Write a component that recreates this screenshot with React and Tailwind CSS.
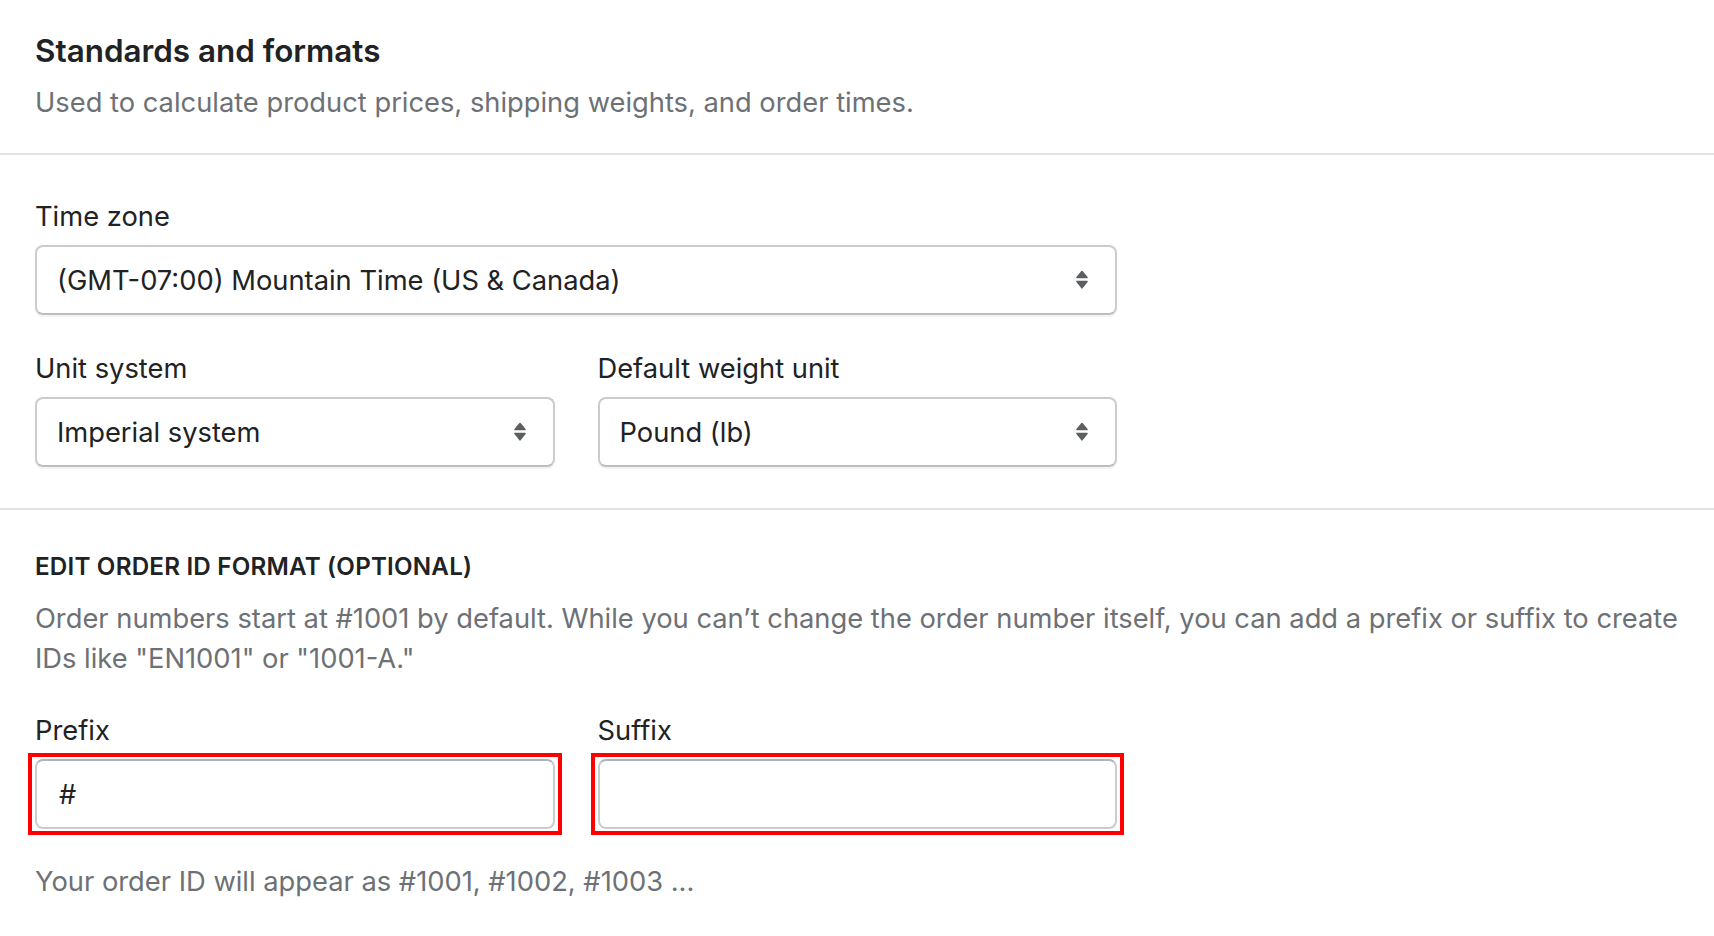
import React from "react";

function Arrows() {
  return (
    <svg width="12" height="20" viewBox="0 0 12 20" className="shrink-0">
      <polygon points="6,1.5 11,7.5 1,7.5" fill="#5c5f62" stroke="#5c5f62" strokeWidth="1.6" strokeLinejoin="round" />
      <polygon points="1,11.5 11,11.5 6,17.8" fill="#5c5f62" stroke="#5c5f62" strokeWidth="1.6" strokeLinejoin="round" />
    </svg>
  );
}

function Select({ value }) {
  return (
    <div className="mt-[9px] h-[70px] rounded-[8px] border-2 border-[#c9cccf] border-b-[#babfc4] bg-white shadow-[0_2px_0_rgba(22,29,37,0.05)] flex items-center justify-between pl-[20px] pr-[27px]">
      <span className="text-[27.3px] leading-[39px] text-[#202223]">{value}</span>
      <Arrows />
    </div>
  );
}

function Field({ label, value }) {
  return (
    <div>
      <div className="text-[27.3px] leading-[39px] text-[#202223]">{label}</div>
      <div className="relative mt-[9px]">
        <div className="absolute -inset-x-[7px] -inset-y-[6px] border-4 border-[#ff0000] pointer-events-none" />
        <div className="h-[70px] rounded-[8px] border-2 border-[#c9cccf] border-t-[#aeb4b9] bg-white flex items-center pl-[22px]">
          <span className="text-[27.3px] leading-[39px] text-[#202223]">{value}</span>
        </div>
      </div>
    </div>
  );
}

export default function App() {
  return (
    <div className="w-[1714px] h-[936px] bg-white font-['Inter',sans-serif] text-[#202223] overflow-hidden">
      <section className="px-[35px] pt-[28px] pb-[31px]">
        <h2 className="text-[31.4px] leading-[47px] font-semibold">Standards and formats</h2>
        <p className="mt-[8px] text-[27.3px] leading-[39px] text-[#6d7175]">
          Used to calculate product prices, shipping weights, and order times.
        </p>
      </section>
      <div className="h-[2px] bg-[#e1e3e5]" />
      <section className="px-[35px] pt-[42px] pb-[41px]">
        <div className="w-[1082px]">
          <div className="text-[27.3px] leading-[39px]">Time zone</div>
          <Select value="(GMT-07:00) Mountain Time (US & Canada)" />
          <div className="mt-[34px] grid grid-cols-2 gap-[43px]">
            <div>
              <div className="text-[27.3px] leading-[39px]">Unit system</div>
              <Select value="Imperial system" />
            </div>
            <div>
              <div className="text-[27.3px] leading-[39px]">Default weight unit</div>
              <Select value="Pound (lb)" />
            </div>
          </div>
        </div>
      </section>
      <div className="h-[2px] bg-[#e1e3e5]" />
      <section className="px-[35px] pt-[41px]">
        <h3 className="text-[24.2px] leading-[31px] font-semibold uppercase tracking-[0.2px]">Edit order ID format (optional)</h3>
        <p className="mt-[17px] text-[27.3px] leading-[40px] text-[#6d7175]">
          Order numbers start at #1001 by default. While you can’t change the order number itself, you can add a prefix or suffix to create IDs like "EN1001" or "1001-A."
        </p>
        <div className="mt-[32px] w-[1082px] grid grid-cols-2 gap-[43px]">
          <Field label="Prefix" value="#" />
          <Field label="Suffix" value="" />
        </div>
        <p className="mt-[33px] text-[27.3px] leading-[39px] text-[#6d7175]">
          Your order ID will appear as #1001, #1002, #1003 ...
        </p>
      </section>
    </div>
  );
}
